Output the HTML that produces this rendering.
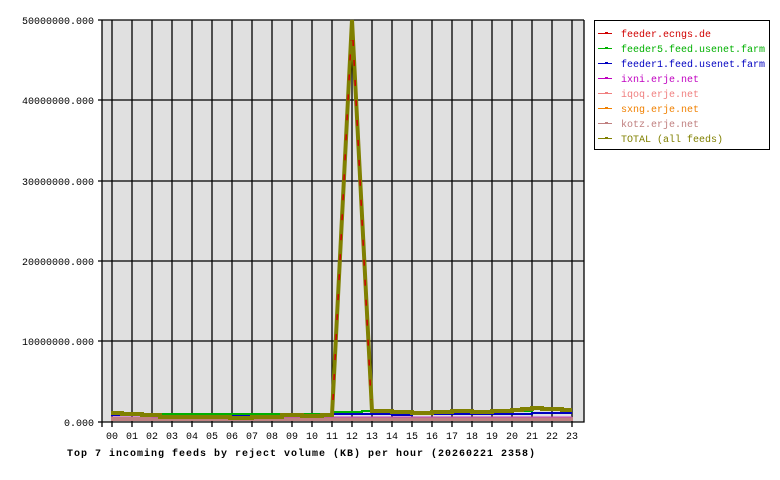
<!DOCTYPE html>
<html><head><style>
html,body{margin:0;padding:0;background:#fff;width:780px;height:480px;overflow:hidden}
text{font-family:"Liberation Mono","DejaVu Sans Mono",monospace;font-size:10px}
</style></head><body>
<svg width="780" height="480" xmlns="http://www.w3.org/2000/svg">
<rect x="102" y="20" width="482" height="402" fill="#e0e0e0"/>
<g stroke="#000" stroke-width="1.3" fill="none">
<path d="M112 20V422M132 20V422M152 20V422M172 20V422M192 20V422M212 20V422M232 20V422M252 20V422M272 20V422M292 20V422M312 20V422M332 20V422M352 20V422M372 20V422M392 20V422M412 20V422M432 20V422M452 20V422M472 20V422M492 20V422M512 20V422M532 20V422M552 20V422M572 20V422"/>
<path d="M98 20H584M98 100H584M98 181H584M98 261H584M98 341H584"/>
<path d="M102 20V427M98 422H584V20M112 422V427M132 422V427M152 422V427M172 422V427M192 422V427M212 422V427M232 422V427M252 422V427M272 422V427M292 422V427M312 422V427M332 422V427M352 422V427M372 422V427M392 422V427M412 422V427M432 422V427M452 422V427M472 422V427M492 422V427M512 422V427M532 422V427M552 422V427M572 422V427"/>
</g>
<rect x="111" y="417" width="462" height="4" fill="#c08080"/>
<path d="M111 416H152V417H572" stroke="#c040c0" stroke-width="1" fill="none"/>
<path d="M111 415H170V415H290V414H332V414H392V415H412V414H472V414H532V413H572" stroke="#0000c0" stroke-width="2" fill="none"/>
<path d="M111 413H122V414H332V412H362V411H412V412H452V411H472V412H512V411H532V409H572" stroke="#00b000" stroke-width="2" fill="none"/>
<path d="M111 413H122V414H142V415H160V417H230V418H252V417H282V415H302V416H322V415H332L352 20L372 411H392V412H412V413H432V412H452V411H472V412H492V411H512V410H522V409H532V408H542V409H562V410H572" stroke="#808000" stroke-width="4" fill="none"/>
<path d="M333 400L351 40M353 40L371 400" stroke="#d00000" stroke-width="1.5" stroke-dasharray="6 14" fill="none"/>
<g text-anchor="end" fill="#000">
<text x="94" y="24">50000000.000</text>
<text x="94" y="104">40000000.000</text>
<text x="94" y="185">30000000.000</text>
<text x="94" y="265">20000000.000</text>
<text x="94" y="345">10000000.000</text>
<text x="94" y="426">0.000</text>
</g>
<g text-anchor="middle" fill="#000">
<text x="112" y="439">00</text><text x="132" y="439">01</text><text x="152" y="439">02</text><text x="172" y="439">03</text><text x="192" y="439">04</text><text x="212" y="439">05</text><text x="232" y="439">06</text><text x="252" y="439">07</text><text x="272" y="439">08</text><text x="292" y="439">09</text><text x="312" y="439">10</text><text x="332" y="439">11</text><text x="352" y="439">12</text><text x="372" y="439">13</text><text x="392" y="439">14</text><text x="412" y="439">15</text><text x="432" y="439">16</text><text x="452" y="439">17</text><text x="472" y="439">18</text><text x="492" y="439">19</text><text x="512" y="439">20</text><text x="532" y="439">21</text><text x="552" y="439">22</text><text x="572" y="439">23</text>
</g>
<text x="67" y="456" font-weight="bold" font-size="11" textLength="468">Top 7 incoming feeds by reject volume (KB) per hour (20260221 2358)</text>
<rect x="594.5" y="20.5" width="175" height="129" fill="#fff" stroke="#000"/>
<g>
<path d="M598 33.5h14" stroke="#d00000"/><rect x="605" y="32" width="3" height="2" fill="#d00000"/><text x="621" y="37" fill="#d00000">feeder.ecngs.de</text>
<path d="M598 48.5h14" stroke="#00b000"/><rect x="605" y="47" width="3" height="2" fill="#00b000"/><text x="621" y="52" fill="#00b000">feeder5.feed.usenet.farm</text>
<path d="M598 63.5h14" stroke="#0000c0"/><rect x="605" y="62" width="3" height="2" fill="#0000c0"/><text x="621" y="67" fill="#0000c0">feeder1.feed.usenet.farm</text>
<path d="M598 78.5h14" stroke="#c000c0"/><rect x="605" y="77" width="3" height="2" fill="#c000c0"/><text x="621" y="82" fill="#c000c0">ixni.erje.net</text>
<path d="M598 93.5h14" stroke="#f08080"/><rect x="605" y="92" width="3" height="2" fill="#f08080"/><text x="621" y="97" fill="#f08080">iqoq.erje.net</text>
<path d="M598 108.5h14" stroke="#f08000"/><rect x="605" y="107" width="3" height="2" fill="#f08000"/><text x="621" y="112" fill="#f08000">sxng.erje.net</text>
<path d="M598 123.5h14" stroke="#c08080"/><rect x="605" y="122" width="3" height="2" fill="#c08080"/><text x="621" y="127" fill="#c08080">kotz.erje.net</text>
<path d="M598 138.5h14" stroke="#808000"/><rect x="605" y="137" width="3" height="2" fill="#808000"/><text x="621" y="142" fill="#808000">TOTAL (all feeds)</text>
</g>
</svg>
</body></html>
